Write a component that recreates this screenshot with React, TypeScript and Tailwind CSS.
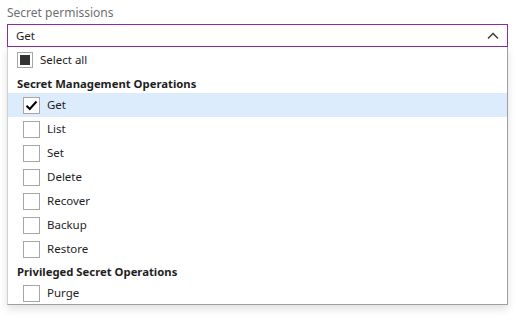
import React from "react";

const font = { fontFamily: '"Segoe UI", "Noto Sans", "Open Sans", sans-serif' };

function Box({ checked }: { checked?: boolean }) {
  return (
    <div className="w-[17px] h-[17px] border border-[#a6a6a6] bg-white flex items-center justify-center shrink-0">
      {checked && (
        <svg width="15" height="15" viewBox="0 0 15 15">
          <path d="M2.5 7.8 L5.8 11 L12.5 3.5" fill="none" stroke="#000" strokeWidth="2" />
        </svg>
      )}
    </div>
  );
}

function Row({ label, checked }: { label: string; checked?: boolean }) {
  return (
    <div className={`h-[24px] flex items-center pl-[15px] gap-[7px] ${checked ? "bg-[#dcecfc]" : ""}`}>
      <Box checked={checked} />
      <span className="text-[11.5px] text-[#1e1e1e]">{label}</span>
    </div>
  );
}

export default function App() {
  const items = ["List", "Set", "Delete", "Recover", "Backup", "Restore"];
  return (
    <div className="w-[521px] h-[320px] bg-white" style={font}>
      <div className="pl-[7px] pr-[13px]">
        <div className="h-[24px] flex items-center pt-[2px] text-[12px] text-[#6f6f6f]">Secret permissions</div>
        <div className="h-[23px] border border-[#8a2ca4] flex items-center justify-between pl-[8px] pr-[8px]">
          <span className="text-[11.5px] text-[#1e1e1e]">Get</span>
          <svg width="12" height="8" viewBox="0 0 12 8">
            <path d="M1 6.5 L6 1.5 L11 6.5" fill="none" stroke="#333" strokeWidth="1.3" />
          </svg>
        </div>
        <div className="h-[258px] border-l border-l-[#d0d0d0] border-r border-r-[#a0a0a0] border-b border-b-[#a0a0a0] shadow-[0_4px_8px_rgba(0,0,0,0.12)] bg-white">
          <div className="h-[26px] flex items-center pl-[9px] gap-[7px]">
            <div className="w-[16px] h-[16px] border border-[#a6a6a6] flex items-center justify-center">
              <div className="w-[10px] h-[10px] bg-[#333]" />
            </div>
            <span className="text-[11.5px] text-[#1e1e1e]">Select all</span>
          </div>
          <div className="h-[20px] flex items-center pl-[9px] pt-[3px] text-[11.3px] font-bold text-[#1e1e1e]">Secret Management Operations</div>
          <Row label="Get" checked />
          {items.map((l) => (
            <Row key={l} label={l} />
          ))}
          <div className="h-[20px] flex items-center pl-[9px] pt-[2px] text-[11.3px] font-bold text-[#1e1e1e]">Privileged Secret Operations</div>
          <Row label="Purge" />
        </div>
      </div>
    </div>
  );
}
